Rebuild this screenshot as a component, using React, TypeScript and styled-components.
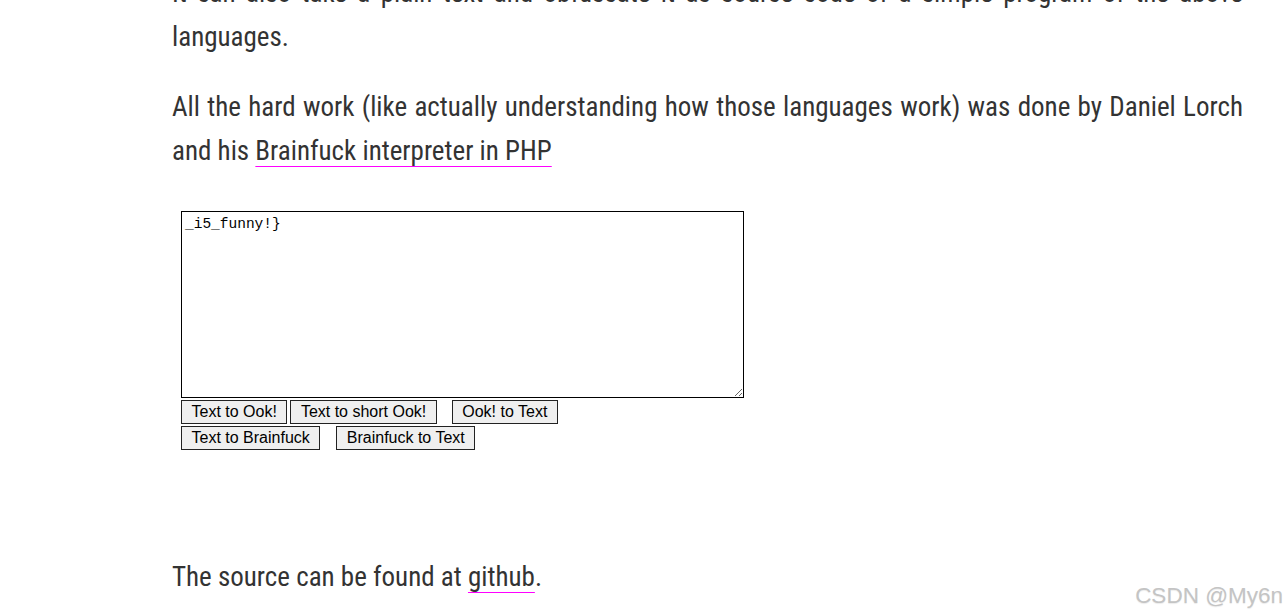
import React from 'react';
import styled, { createGlobalStyle } from 'styled-components';

const GlobalStyle = createGlobalStyle`
  html, body {
    margin: 0;
    padding: 0;
    background: #fff;
    overflow: hidden;
  }
`;

const Page = styled.div`
  width: 1286px;
  height: 616px;
  position: relative;
  overflow: hidden;
`;

const Article = styled.article`
  width: 1071px;
  margin: -29px 0 0 172px;
  font-family: Roboto, "Open Sans", sans-serif;
  font-stretch: condensed;
  font-size: 27px;
  color: #333;
`;

const Para = styled.p<{ $before?: number; $after?: number }>`
  margin: ${p => p.$before ?? 0}px 0 ${p => p.$after ?? 26}px;
  line-height: 44px;
  text-align: justify;
`;

const Link = styled.a`
  color: inherit;
  text-decoration: underline;
  text-decoration-color: #ff00ff;
  text-decoration-thickness: 1px;
  text-decoration-skip-ink: none;
  text-underline-offset: 6px;
`;

const Converter = styled.form`
  display: flex;
  flex-direction: column;
  gap: 2px;
  margin: 38px 0 0 9px;
`;

const Source = styled.textarea`
  box-sizing: border-box;
  width: 563px;
  height: 187px;
  margin: 0;
  padding: 4px 3px;
  border: 1px solid #000;
  font-family: "Liberation Mono", monospace;
  font-size: 14.5px;
  line-height: 16px;
  color: #000;
  outline: none;
`;

const ButtonRow = styled.div`
  display: flex;
  align-items: flex-start;
`;

const ConvertButton = styled.button<{ $lead?: number }>`
  box-sizing: border-box;
  height: 24px;
  margin: 0 0 0 ${p => p.$lead ?? 0}px;
  padding: 0 9.5px;
  border: 1px solid #222;
  border-radius: 0;
  background: #efefef;
  font-family: "Liberation Sans", Arial, sans-serif;
  font-size: 16px;
  line-height: 20px;
  color: #000;
  cursor: pointer;
`;

const Watermark = styled.div`
  position: absolute;
  right: 3px;
  bottom: 7px;
  font-family: "Liberation Sans", Arial, sans-serif;
  font-size: 22.5px;
  color: #c4c4c4;
  text-shadow: 0 1px 1px rgba(0, 0, 0, 0.08);
  pointer-events: none;
`;

const App = () => {
  return (
    <Page>
      <GlobalStyle />
      <Article>
        <Para>
          It can also take a plain text and obfuscate it as source code of a simple program of the above languages.
        </Para>
        <Para $after={0}>
          All the hard work (like actually understanding how those languages work) was done by Daniel Lorch and his{' '}
          <Link href="#">Brainfuck interpreter in PHP</Link>
        </Para>
        <Converter onSubmit={e => e.preventDefault()}>
          <Source defaultValue="_i5_funny!}" spellCheck={false} />
          <ButtonRow>
            <ConvertButton type="button">Text to Ook!</ConvertButton>
            <ConvertButton type="button" $lead={3}>Text to short Ook!</ConvertButton>
            <ConvertButton type="button" $lead={15}>Ook! to Text</ConvertButton>
          </ButtonRow>
          <ButtonRow>
            <ConvertButton type="button">Text to Brainfuck</ConvertButton>
            <ConvertButton type="button" $lead={16}>Brainfuck to Text</ConvertButton>
          </ButtonRow>
        </Converter>
        <Para $before={105}>
          The source can be found at <Link href="#">github</Link>.
        </Para>
      </Article>
      <Watermark>CSDN @My6n</Watermark>
    </Page>
  );
};

export default App;
